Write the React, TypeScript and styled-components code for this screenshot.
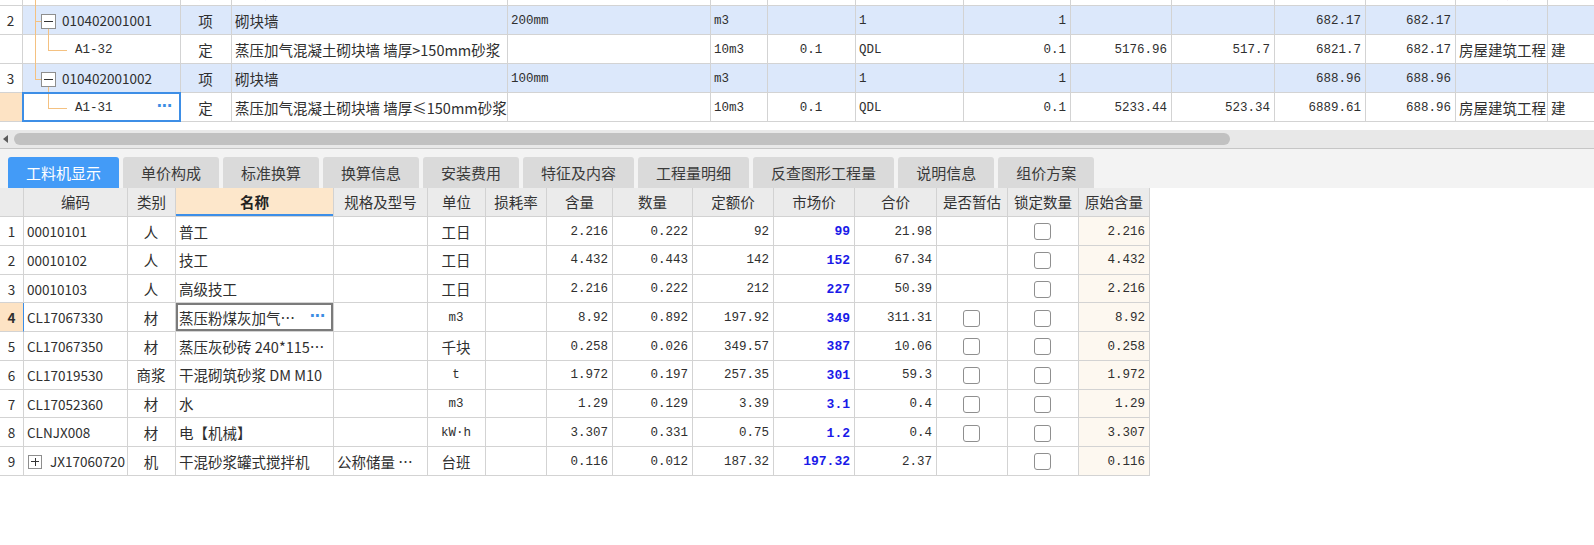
import React from 'react';
import styled, { createGlobalStyle, css } from 'styled-components';

const SANS = `"Noto Sans CJK SC", "Noto Sans", sans-serif`;
const MONO = `"Liberation Mono", "DejaVu Sans Mono", "Noto Sans CJK SC", monospace`;
const GRID = '#d3d3d3';
const TREE = '#f4c181';

const GlobalStyle = createGlobalStyle`
  html, body { margin: 0; padding: 0; background: #ffffff; }
  body { overflow: hidden; font-family: ${SANS}; color: #2f2f2f; }
  *, *::before, *::after { box-sizing: border-box; }
`;

type Align = 'left' | 'center' | 'right';
type Face = 'sans' | 'mono' | 'cjk' | 'blue';

const faceCss = (f: Face) => {
  switch (f) {
    case 'mono':
      return css`font-family: ${MONO}; font-size: 12.5px;`;
    case 'blue':
      return css`font-family: ${MONO}; font-size: 13px; font-weight: 700; color: #1a1ae8;`;
    case 'sans':
      return css`font-family: ${SANS}; font-size: 13.5px;`;
    default:
      return css`font-family: ${SANS}; font-size: 14.5px;`;
  }
};

const Page = styled.div`
  width: 1594px;
  height: 545px;
  overflow: hidden;
  display: flex;
  flex-direction: column;
  background: #fff;
`;

/* ---------- upper (清单) grid ---------- */
const TopViewport = styled.div`
  flex: none;
  height: 122px;
  overflow: hidden;
`;
const TopBody = styled.div`
  margin-top: -23px;
  width: 1660px;
`;
const TOP_COLS = '23px 158px 51px 276px 203px 57px 88px 108px 107px 101px 103px 91px 90px 92px 120px';

const TopRow = styled.div<{ $tone: 'plain' | 'group' }>`
  display: grid;
  grid-template-columns: ${TOP_COLS};
  height: 29px;
  background: ${p => (p.$tone === 'group' ? '#dce8fb' : '#ffffff')};
`;

const Cell = styled.div<{ $align?: Align; $face?: Face; $bg?: string }>`
  position: relative;
  display: flex;
  align-items: center;
  justify-content: ${p =>
    p.$align === 'right' ? 'flex-end' : p.$align === 'center' ? 'center' : 'flex-start'};
  padding: 2px 4px 0 3px;
  border-right: 1px solid ${GRID};
  border-bottom: 1px solid ${GRID};
  ${p => p.$bg && css`background: ${p.$bg};`}
  white-space: nowrap;
  line-height: 1;
  min-width: 0;
  ${p => faceCss(p.$face ?? 'cjk')}
`;

const CodeCell = styled(Cell)<{ $indent: number; $picked?: boolean }>`
  padding-left: ${p => p.$indent}px;
  ${p =>
    p.$picked &&
    css`
      &::after {
        content: '';
        position: absolute;
        left: -1px;
        top: -1px;
        right: -1px;
        bottom: -1px;
        border: 2px solid #3d8ee6;
        z-index: 2;
      }
    `}
`;

const VLink = styled.span<{ $left: number; $span: 'full' | 'upper' | 'lower' }>`
  position: absolute;
  left: ${p => p.$left}px;
  width: 1px;
  background: ${TREE};
  z-index: 1;
  top: ${p => (p.$span === 'lower' ? '21px' : '-1px')};
  ${p => (p.$span === 'upper' ? css`height: 16px;` : css`bottom: -1px;`)}
`;

const HLink = styled.span<{ $left: number; $width: number }>`
  position: absolute;
  left: ${p => p.$left}px;
  width: ${p => p.$width}px;
  top: 15px;
  height: 1px;
  background: ${TREE};
  z-index: 1;
`;

const Toggle = styled.span<{ $open: boolean; $size: number; $gap: number }>`
  position: relative;
  flex: none;
  width: ${p => p.$size}px;
  height: ${p => p.$size}px;
  margin-right: ${p => p.$gap}px;
  border: 1px solid #8e8e8e;
  background: #fff;
  z-index: 2;
  &::before {
    content: '';
    position: absolute;
    left: 2px;
    right: 2px;
    top: 50%;
    height: 1px;
    margin-top: -0.5px;
    background: #333;
  }
  &::after {
    content: '';
    display: ${p => (p.$open ? 'none' : 'block')};
    position: absolute;
    top: 2px;
    bottom: 2px;
    left: 50%;
    width: 1px;
    margin-left: -0.5px;
    background: #333;
  }
`;

const MoreDots = styled.span`
  margin-left: auto;
  padding: 0 4px 3px 6px;
  font-family: "DejaVu Sans", sans-serif;
  font-size: 15px;
  font-weight: 700;
  letter-spacing: -0.5px;
  color: #3b8de3;
`;

const TOP_SPEC: { align: Align; face: Face }[] = [
  { align: 'center', face: 'cjk' },
  { align: 'left', face: 'cjk' },
  { align: 'left', face: 'mono' },
  { align: 'left', face: 'mono' },
  { align: 'center', face: 'mono' },
  { align: 'left', face: 'mono' },
  { align: 'right', face: 'mono' },
  { align: 'right', face: 'mono' },
  { align: 'right', face: 'mono' },
  { align: 'right', face: 'mono' },
  { align: 'right', face: 'mono' },
  { align: 'left', face: 'cjk' },
  { align: 'left', face: 'cjk' },
];

type TopItem = {
  num: string;
  kind: 'group' | 'item';
  code: string;
  outer?: 'full' | 'upper';
  inner?: 'upper' | 'lower';
  picked?: boolean;
  cells: string[];
};

const TOP_ITEMS: TopItem[] = [
  {
    num: '',
    kind: 'item',
    code: 'A1-33',
    outer: 'full',
    cells: ['定', '蒸压加气混凝土砌块墙 墙厚≤200mm砂浆', '', '10m3', '0.1', 'QDL', '0.1', '5176.96', '517.7', '6821.7', '682.17', '房屋建筑工程', '建'],
  },
  {
    num: '2',
    kind: 'group',
    code: '010402001001',
    outer: 'full',
    inner: 'lower',
    cells: ['项', '砌块墙', '200mm', 'm3', '', '1', '1', '', '', '682.17', '682.17', '', ''],
  },
  {
    num: '',
    kind: 'item',
    code: 'A1-32',
    outer: 'full',
    inner: 'upper',
    cells: ['定', '蒸压加气混凝土砌块墙 墙厚>150mm砂浆', '', '10m3', '0.1', 'QDL', '0.1', '5176.96', '517.7', '6821.7', '682.17', '房屋建筑工程', '建'],
  },
  {
    num: '3',
    kind: 'group',
    code: '010402001002',
    outer: 'upper',
    inner: 'lower',
    cells: ['项', '砌块墙', '100mm', 'm3', '', '1', '1', '', '', '688.96', '688.96', '', ''],
  },
  {
    num: '',
    kind: 'item',
    code: 'A1-31',
    inner: 'upper',
    picked: true,
    cells: ['定', '蒸压加气混凝土砌块墙 墙厚≤150mm砂浆', '', '10m3', '0.1', 'QDL', '0.1', '5233.44', '523.34', '6889.61', '688.96', '房屋建筑工程', '建'],
  },
];

function TopLine({ item, first }: { item: TopItem; first: boolean }) {
  const group = item.kind === 'group';
  return (
    <TopRow $tone={group ? 'group' : 'plain'}>
      <Cell $align="center" $face="sans" $bg={item.picked ? '#fde3c4' : '#ffffff'}>
        {item.num}
      </Cell>
      <CodeCell $indent={group ? 18 : 52} $face={group ? 'sans' : 'mono'} $picked={item.picked}>
        {item.outer && <VLink $left={12} $span={item.outer} />}
        {group && <HLink $left={12} $width={6} />}
        {item.inner && <VLink $left={25} $span={item.inner} />}
        {!group && !first && <HLink $left={25} $width={19} />}
        {group && <Toggle $open $size={15} $gap={6} />}
        {item.code}
        {item.picked && <MoreDots>···</MoreDots>}
      </CodeCell>
      {item.cells.map((v, i) => (
        <Cell key={i} $align={TOP_SPEC[i].align} $face={TOP_SPEC[i].face}>
          {v}
        </Cell>
      ))}
    </TopRow>
  );
}

/* ---------- horizontal scrollbar ---------- */
const HScroll = styled.div`
  flex: none;
  margin-top: 8px;
  height: 18px;
  background: #e8e8e8;
  display: flex;
  align-items: center;
  padding-left: 3px;
  gap: 6px;
`;
const ScrollArrow = styled.span`
  width: 0;
  height: 0;
  border-top: 4px solid transparent;
  border-bottom: 4px solid transparent;
  border-right: 5px solid #5c5c5c;
`;
const ScrollThumb = styled.span`
  width: 1216px;
  height: 12px;
  border-radius: 6px;
  background: #c1c1c1;
`;

/* ---------- tabs ---------- */
const TabBar = styled.div`
  flex: none;
  height: 40px;
  border-top: 1px solid #c6c6c6;
  background: #f3f3f3;
  padding: 8px 0 0 8px;
  display: flex;
  align-items: flex-end;
  gap: 4px;
`;
const Tab = styled.div<{ $active?: boolean }>`
  height: 31px;
  padding: 0 18px;
  display: flex;
  align-items: center;
  border-radius: 3px 3px 0 0;
  font-family: ${SANS};
  font-size: 15px;
  line-height: 1;
  color: ${p => (p.$active ? '#ffffff' : '#3a3a3a')};
  background: ${p => (p.$active ? '#439bf7' : '#dadada')};
`;

const TABS = ['工料机显示', '单价构成', '标准换算', '换算信息', '安装费用', '特征及内容', '工程量明细', '反查图形工程量', '说明信息', '组价方案'];

/* ---------- lower (工料机) grid ---------- */
const LOW_COLS = '24px 104px 48px 158px 94px 58px 61px 66px 80px 81px 81px 82px 71px 71px 71px';

const LowTable = styled.div`
  flex: none;
  width: 1150px;
`;
const LowHead = styled.div`
  display: grid;
  grid-template-columns: ${LOW_COLS};
  height: 29px;
  background: #ebebeb;
`;
const HeadCell = styled.div<{ $focus?: boolean }>`
  display: flex;
  align-items: center;
  justify-content: center;
  padding-top: 1px;
  border-right: 1px solid #d2d2d2;
  border-bottom: 1px solid #d2d2d2;
  font-family: ${SANS};
  font-size: 14.5px;
  line-height: 1;
  color: #333;
  white-space: nowrap;
  ${p =>
    p.$focus &&
    css`
      background: #fde7cb;
      font-weight: 700;
      color: #222;
      box-shadow: inset 0 -2px 0 #3d8fe8;
    `}
`;
const LowRow = styled.div`
  display: grid;
  grid-template-columns: ${LOW_COLS};
  height: 28.75px;
  background: #fff;
`;
const RowNum = styled(Cell)<{ $current?: boolean }>`
  justify-content: center;
  padding: 2px 0 0;
  font-family: ${SANS};
  font-size: 13.5px;
  ${p =>
    p.$current &&
    css`
      background: #fde3c4;
      font-weight: 700;
      border-right-color: #3b8ee8;
    `}
`;
const FocusCell = styled(Cell)`
  box-shadow: inset 0 0 0 2px #7b7b7b;
`;
const Check = styled.span`
  width: 17px;
  height: 17px;
  border: 1px solid #8f8f8f;
  border-radius: 3px;
  background: #fff;
`;

const LOW_HEAD = ['', '编码', '类别', '名称', '规格及型号', '单位', '损耗率', '含量', '数量', '定额价', '市场价', '合价', '是否暂估', '锁定数量', '原始含量'];

type LowItem = {
  n: string;
  code: string;
  plus?: boolean;
  type: string;
  name: string;
  spec: string;
  unit: string;
  content: string;
  qty: string;
  quota: string;
  market: string;
  total: string;
  est: boolean;
  orig: string;
};

const LOW_ITEMS: LowItem[] = [
  { n: '1', code: '00010101', type: '人', name: '普工', spec: '', unit: '工日', content: '2.216', qty: '0.222', quota: '92', market: '99', total: '21.98', est: false, orig: '2.216' },
  { n: '2', code: '00010102', type: '人', name: '技工', spec: '', unit: '工日', content: '4.432', qty: '0.443', quota: '142', market: '152', total: '67.34', est: false, orig: '4.432' },
  { n: '3', code: '00010103', type: '人', name: '高级技工', spec: '', unit: '工日', content: '2.216', qty: '0.222', quota: '212', market: '227', total: '50.39', est: false, orig: '2.216' },
  { n: '4', code: 'CL17067330', type: '材', name: '蒸压粉煤灰加气…', spec: '', unit: 'm3', content: '8.92', qty: '0.892', quota: '197.92', market: '349', total: '311.31', est: true, orig: '8.92' },
  { n: '5', code: 'CL17067350', type: '材', name: '蒸压灰砂砖 240*115…', spec: '', unit: '千块', content: '0.258', qty: '0.026', quota: '349.57', market: '387', total: '10.06', est: true, orig: '0.258' },
  { n: '6', code: 'CL17019530', type: '商浆', name: '干混砌筑砂浆 DM M10', spec: '', unit: 't', content: '1.972', qty: '0.197', quota: '257.35', market: '301', total: '59.3', est: true, orig: '1.972' },
  { n: '7', code: 'CL17052360', type: '材', name: '水', spec: '', unit: 'm3', content: '1.29', qty: '0.129', quota: '3.39', market: '3.1', total: '0.4', est: true, orig: '1.29' },
  { n: '8', code: 'CLNJX008', type: '材', name: '电【机械】', spec: '', unit: 'kW·h', content: '3.307', qty: '0.331', quota: '0.75', market: '1.2', total: '0.4', est: true, orig: '3.307' },
  { n: '9', code: 'JX17060720', plus: true, type: '机', name: '干混砂浆罐式搅拌机', spec: '公称储量 …', unit: '台班', content: '0.116', qty: '0.012', quota: '187.32', market: '197.32', total: '2.37', est: false, orig: '0.116' },
];

const hasCjk = (s: string) => /[\u4e00-\u9fff]/.test(s);

function LowLine({ item }: { item: LowItem }) {
  const current = item.n === '4';
  const NameCell = current ? FocusCell : Cell;
  return (
    <LowRow>
      <RowNum $current={current}>{item.n}</RowNum>
      <CodeCell $indent={item.plus ? 4 : 3} $face="sans">
        {item.plus && <Toggle $open={false} $size={14} $gap={8} />}
        {item.code}
      </CodeCell>
      <Cell $align="center">{item.type}</Cell>
      <NameCell>
        {item.name}
        {current && <MoreDots>···</MoreDots>}
      </NameCell>
      <Cell>{item.spec}</Cell>
      <Cell $align="center" $face={hasCjk(item.unit) ? 'cjk' : 'mono'}>{item.unit}</Cell>
      <Cell />
      <Cell $align="right" $face="mono">{item.content}</Cell>
      <Cell $align="right" $face="mono">{item.qty}</Cell>
      <Cell $align="right" $face="mono">{item.quota}</Cell>
      <Cell $align="right" $face="blue">{item.market}</Cell>
      <Cell $align="right" $face="mono">{item.total}</Cell>
      <Cell $align="center">{item.est && <Check />}</Cell>
      <Cell $align="center"><Check /></Cell>
      <Cell $align="right" $face="mono" $bg="#fdf8f0">{item.orig}</Cell>
    </LowRow>
  );
}

export default function App() {
  return (
    <>
      <GlobalStyle />
      <Page>
        <TopViewport>
          <TopBody>
            {TOP_ITEMS.map((it, i) => (
              <TopLine key={i} item={it} first={i === 0} />
            ))}
          </TopBody>
        </TopViewport>
        <HScroll>
          <ScrollArrow />
          <ScrollThumb />
        </HScroll>
        <TabBar>
          {TABS.map((t, i) => (
            <Tab key={t} $active={i === 0}>
              {t}
            </Tab>
          ))}
        </TabBar>
        <LowTable>
          <LowHead>
            {LOW_HEAD.map((h, i) => (
              <HeadCell key={i} $focus={h === '名称'}>
                {h}
              </HeadCell>
            ))}
          </LowHead>
          {LOW_ITEMS.map(it => (
            <LowLine key={it.n} item={it} />
          ))}
        </LowTable>
      </Page>
    </>
  );
}
